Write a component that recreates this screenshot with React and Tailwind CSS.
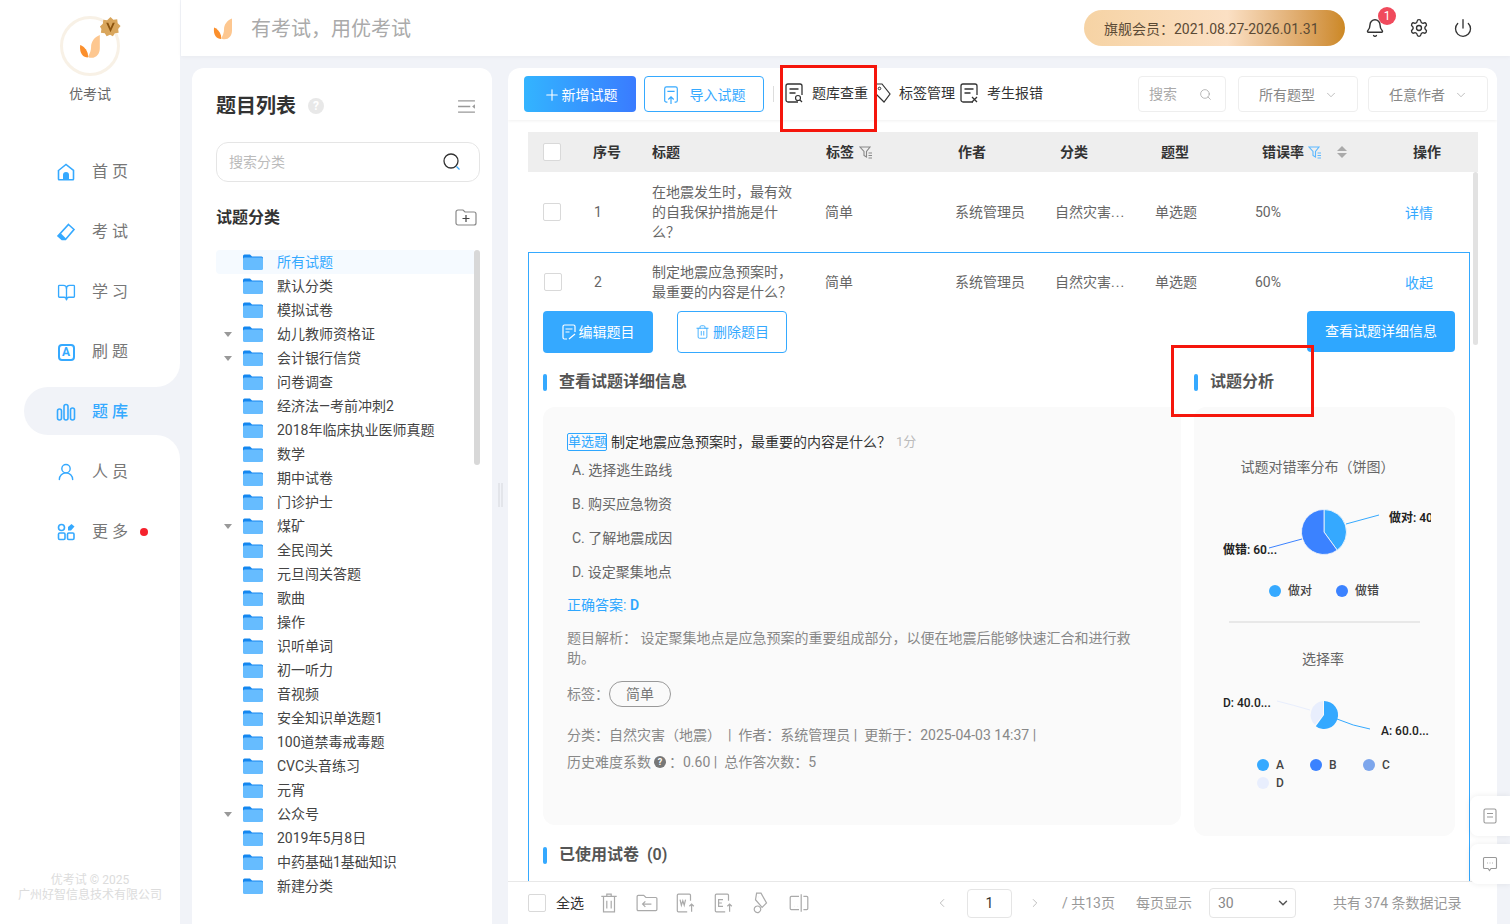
import { Bell, Settings, Power, Search, ChevronDown, ChevronLeft, ChevronRight, Plus, BookOpen, UserRound, Trash2 } from "lucide-react";

const NAV = [
    { label: "首 页", icon: "home" },
    { label: "考 试", icon: "eraser" },
    { label: "学 习", icon: "book" },
    { label: "刷 题", icon: "a" },
    { label: "题 库", icon: "bars" },
    { label: "人 员", icon: "user" },
    { label: "更 多", icon: "more" },
];

const TREE = [
    ["所有试题", false],
    ["默认分类", false],
    ["模拟试卷", false],
    ["幼儿教师资格证", true],
    ["会计银行信贷", true],
    ["问卷调查", false],
    ["经济法—考前冲刺2", false],
    ["2018年临床执业医师真题", false],
    ["数学", false],
    ["期中试卷", false],
    ["门诊护士", false],
    ["煤矿", true],
    ["全民闯关", false],
    ["元旦闯关答题", false],
    ["歌曲", false],
    ["操作", false],
    ["识听单词", false],
    ["初一听力", false],
    ["音视频", false],
    ["安全知识单选题1", false],
    ["100道禁毒戒毒题", false],
    ["CVC头音练习", false],
    ["元宵", false],
    ["公众号", true],
    ["2019年5月8日", false],
    ["中药基础1基础知识", false],
    ["新建分类", false],
];

function Logo({ className }) {
    return (
        <svg viewBox="0 0 20 22" className={className}>
            <path d="M19 1c-5 2-8 6-8 11 0 3-1 6-3 9 1 .5 2 .8 3.5.8C16 21.800 19 18 19 13z" fill="#fdc790" />
            <path d="M1 10c3 1 6 4 7 8 .2 1.500.2 2.500 0 3.500C4 21.500 0 18 1 10z" fill="#fb8f2c" />
        </svg>
    );
}

function NavIcon({ name }) {
    if (name === "book") return <BookOpen className="w-[19px] h-[19px] text-[#35a9ff]" strokeWidth={1.7} />;
    if (name === "user") return <UserRound className="w-5 h-5 text-[#35a9ff]" strokeWidth={1.7} />;
    if (name === "a") {
        return <div className="w-[17px] h-[17px] rounded-[4px] border-2 border-[#35a9ff] flex items-center justify-center text-[12px] font-bold leading-none text-[#35a9ff]">A</div>;
    }
    const stroke = { fill: "none", stroke: "#35a9ff", strokeWidth: 1.6 };
    return (
        <svg viewBox="0 0 20 20" className="w-5 h-5">
            {name === "home" && (
                <>
                    <path d="M2.500 8.500 10 2.500l7.500 6V17a.8.8 0 0 1-.8.8H3.300a.8.8 0 0 1-.8-.8z" {...stroke} />
                    <path d="M7 17.800V13a3 3 0 0 1 6 0v4.800z" fill="#35a9ff" />
                </>
            )}
            {name === "eraser" && (
                <>
                    <path d="M12.500 2.500 18 7.500 9.500 17.500H6L2 14z" {...stroke} />
                    <path d="M2 14l2.500-3 5.500 5.500-.5 1H6z" fill="#35a9ff" />
                </>
            )}
            {name === "bars" && (
                <>
                    <rect x="1.500" y="7" width="4" height="11" rx="2" {...stroke} />
                    <rect x="8" y="2.500" width="4" height="15.500" rx="2" {...stroke} />
                    <rect x="14.500" y="6" width="4" height="12" rx="2" {...stroke} />
                </>
            )}
            {name === "more" && (
                <>
                    <circle cx="5.500" cy="5.500" r="3" {...stroke} />
                    <rect x="2.500" y="11" width="6.500" height="6.500" rx="1.200" {...stroke} />
                    <rect x="11.500" y="11" width="6.500" height="6.500" rx="1.200" {...stroke} />
                    <path d="M12 8.500V5l3.500-3 3 2.500-3.500 4z" fill="#35a9ff" />
                </>
            )}
        </svg>
    );
}

function Sidebar() {
    return (
        <aside className="w-[180px] shrink-0 flex flex-col bg-[#f1f3f8]">
            <div className="bg-white h-[141px] flex flex-col items-center pt-[16px]">
                <div className="relative w-[60px] h-[60px] rounded-full border-[3px] border-[#f8f1e6] flex items-center justify-center">
                    <Logo className="w-[22px] h-[24px]" />
                    <svg viewBox="0 0 24 24" className="absolute -top-[3px] -right-[5px] w-[23px] h-[23px]">
                        <path d="M12 1l3 3 4-.5.5 4 3 3-2.500 3 .5 4-4 .5-2 3-3-1.500-3.500 1.500-2-3-4-.5.5-4L1 11l3-3 .5-4 4 .5z" fill="#d9a65c" />
                        <path d="M7.500 7 12 17l4.500-10h-2.200L12 12.500 9.700 7z" fill="#8c5510" />
                    </svg>
                </div>
                <div className="text-[14px] text-[#666] mt-[8px] leading-5">优考试</div>
            </div>
            {NAV.map((n, i) => (
                <div
                    key={n.label}
                    className={
                        i === 4
                            ? "h-[48px] bg-white"
                            : i === 3
                              ? "h-[66px] pb-[4px] bg-white rounded-br-[24px] flex items-center pl-[56px] gap-[16px]"
                              : i === 5
                                ? "h-[66px] pt-[8px] bg-white rounded-tr-[24px] flex items-center pl-[56px] gap-[16px]"
                                : "h-[60px] pt-[2px] bg-white flex items-center pl-[56px] gap-[16px]"
                    }
                >
                    {i === 4 ? (
                        <div className="h-full ml-[24px] pt-[2px] bg-[#f1f3f8] rounded-l-[24px] flex items-center pl-[32px] gap-[16px]">
                            <NavIcon name={n.icon} />
                            <span className="text-[16px] font-medium text-[#35a9ff]">{n.label}</span>
                        </div>
                    ) : (
                        <>
                            <div className="w-5 flex justify-center">
                                <NavIcon name={n.icon} />
                            </div>
                            <span className="text-[16px] text-[#777]">{n.label}</span>
                            {i === 6 && <span className="w-2 h-2 rounded-full bg-[#f5222d] -ml-[4px]" />}
                        </>
                    )}
                </div>
            ))}
            <div className="flex-1 bg-white flex flex-col justify-end items-center pb-[21px] text-[12px] leading-[15px] text-[#dcdcdc]">
                <div>优考试 © 2025</div>
                <div>广州好智信息技术有限公司</div>
            </div>
        </aside>
    );
}

function Header() {
    return (
        <header className="h-[56px] shrink-0 bg-white ml-px flex items-center pl-[32px] shadow-[0_1px_4px_rgba(0,0,0,0.04)]">
            <Logo className="w-[20px] h-[23px]" />
            <div className="ml-[18px] pt-[2px] text-[20px] text-[#aaa]">有考试&#xFF0C;用优考试</div>
            <div className="ml-auto w-[261px] h-[36px] rounded-full bg-linear-to-r from-[#f6d3a4] via-[#fbe0c4] via-55% to-[#cc8822] flex items-center pl-[20px] pt-[2px] text-[14px] text-[#5b4a35] whitespace-nowrap">
                旗舰会员&#xFF1A;2021.08.27-2026.01.31
            </div>
            <div className="relative ml-[20px]">
                <Bell className="w-[20px] h-[20px] text-[#333]" strokeWidth={1.7} />
                <span className="absolute -top-[11px] left-[13px] w-[18px] h-[18px] rounded-full bg-[#f04a5c] text-white text-[12px] leading-[18px] text-center">1</span>
            </div>
            <Settings className="ml-[24px] w-[20px] h-[20px] text-[#333]" strokeWidth={1.6} />
            <Power className="ml-[24px] mr-[37px] w-[20px] h-[20px] text-[#333]" strokeWidth={1.6} />
        </header>
    );
}

function Folder() {
    return (
        <svg viewBox="0 0 20 16" className="w-5 h-4 shrink-0">
            <path d="M0 2a1.500 1.500 0 0 1 1.500-1.500h5.500l2 2h9.500A1.500 1.500 0 0 1 20 4v3H0z" fill="#1487f0" />
            <rect x="0" y="3.500" width="20" height="12.500" rx="1.500" fill="#66bcff" />
        </svg>
    );
}

function TreePanel() {
    return (
        <section className="w-[300px] shrink-0 bg-white rounded-t-xl pl-[24px] pr-[12px] flex flex-col overflow-hidden">
            <div className="flex items-center h-[28px] mt-[24px]">
                <h1 className="text-[20px] font-bold text-[#333]">题目列表</h1>
                <span className="ml-[12px] w-4 h-4 rounded-full bg-[#e8e8e8] text-white text-[12px] leading-4 text-center font-bold">?</span>
                <svg viewBox="0 0 20 16" className="ml-auto mr-[4px] w-[19px] h-[15px]">
                    <path d="M1 2h18M1 8h13M1 14h18" stroke="#999" strokeWidth="1.500" />
                    <path d="M19 5.500v5L16 8z" fill="#999" />
                </svg>
            </div>
            <div className="mt-[22px] h-[40px] rounded-xl border border-[#e5e5e5] flex items-center pl-[12px] pr-[18px]">
                <span className="text-[14px] text-[#bbb]">搜索分类</span>
                <svg viewBox="0 0 18 18" className="ml-auto w-[18px] h-[18px]">
                    <circle cx="8" cy="8" r="7" fill="none" stroke="#333" strokeWidth="1.300" />
                    <path d="m13.500 13.500 3 3" stroke="#35a9ff" strokeWidth="1.300" />
                </svg>
            </div>
            <div className="mt-[25px] h-[22px] flex items-center justify-between">
                <h2 className="text-[16px] font-semibold text-[#333]">试题分类</h2>
                <svg viewBox="0 0 22 17" className="w-[22px] h-[17px] -mt-[2px] mr-[3px]">
                    <path d="M1 3a2 2 0 0 1 2-2h5l2 2h9a2 2 0 0 1 2 2v9a2 2 0 0 1-2 2H3a2 2 0 0 1-2-2z" fill="none" stroke="#888" strokeWidth="1.200" />
                    <path d="M7.500 9.500h7M11 6v7" stroke="#444" strokeWidth="1.200" />
                </svg>
            </div>
            <div className="mt-[21px] flex relative">
                <div className="flex-1">
                    {TREE.map(([name, caret], i) => (
                        <div key={name} className={i === 0 ? "h-[24px] flex items-center bg-[#f5faff] rounded-l text-[#35a9ff]" : "h-[24px] flex items-center text-[#444]"}>
                            <div className="w-[27px] flex justify-end pr-[11px] shrink-0">
                                {caret && <span className="w-0 h-0 border-x-[4px] border-x-transparent border-t-[5px] border-t-[#999]" />}
                            </div>
                            <Folder />
                            <span className="ml-[14px] text-[14px] whitespace-nowrap">{name}</span>
                        </div>
                    ))}
                </div>
                <div className="w-[6px] h-[215px] rounded bg-[#d8d8d8] shrink-0" />
            </div>
        </section>
    );
}

function ToolIcon({ badge }) {
    return (
        <svg viewBox="0 0 18 20" className="w-[18px] h-[20px] shrink-0">
            <path d="M13 19H3a2 2 0 0 1-2-2V3a2 2 0 0 1 2-2h12a2 2 0 0 1 2 2v9" fill="none" stroke="#333" strokeWidth="1.300" />
            <path d="M4.500 6h9M4.500 10h6" stroke="#333" strokeWidth="1.300" />
            {badge === "search" && (
                <>
                    <circle cx="13" cy="15" r="2.500" fill="#fff" stroke="#333" strokeWidth="1.200" />
                    <path d="m15 17 2 2" stroke="#333" strokeWidth="1.200" />
                </>
            )}
            {badge === "x" && <path d="m12 14 5 5m0-5-5 5" stroke="#333" strokeWidth="1.300" />}
        </svg>
    );
}

function Dropdown({ label }) {
    return (
        <div className="w-[120px] h-[36px] rounded border border-[#eee] flex items-center pl-[20px] pt-[2px] text-[14px] text-[#888]">
            {label}
            <ChevronDown className="ml-[9px] w-[14px] h-[14px] text-[#aaa]" strokeWidth={1.300} />
        </div>
    );
}

function Toolbar() {
    return (
        <div className="h-[52px] shrink-0 pl-[16px] pr-[9px] pb-[8px] pt-[8px] flex items-center shadow-[0_1px_3px_rgba(0,0,0,0.06)] relative">
            <button className="w-[112px] h-[36px] rounded pt-[2px] bg-linear-to-r from-[#33b4ff] to-[#3a7bff] text-white text-[14px] flex items-center justify-center">
                <Plus className="w-[18px] h-[18px] mr-[1px]" strokeWidth={1.500} />
                新增试题
            </button>
            <button className="ml-[8px] w-[120px] h-[36px] rounded pt-[2px] border border-[#35a9ff] text-[#35a9ff] text-[14px] flex items-center justify-center gap-[11px]">
                <svg viewBox="0 0 16 20" className="w-[16px] h-[18px]">
                    <path d="M4 18H3a2 2 0 0 1-2-2V3a2 2 0 0 1 2-2h10a2 2 0 0 1 2 2v13a2 2 0 0 1-2 2h-1M4 6h8" fill="none" stroke="#35a9ff" strokeWidth="1.300" />
                    <path d="M8 20v-8m-3 3 3-3 3 3" fill="none" stroke="#35a9ff" strokeWidth="1.300" />
                </svg>
                导入试题
            </button>
            <div className="ml-[9px] w-px h-[16px] bg-[#ddd]" />
            <div className="ml-[11px] -mt-[2px] flex items-center text-[14px] text-[#333]">
                <ToolIcon badge="search" />
                <span className="ml-[9px]">题库查重</span>
                <svg viewBox="0 0 18 20" className="ml-[5px] w-[18px] h-[20px]">
                    <path d="M3 1h6l8 10-6 8-9-9z" fill="none" stroke="#333" strokeWidth="1.200" />
                    <circle cx="6.500" cy="5.500" r="1.300" fill="none" stroke="#333" strokeWidth="1" />
                </svg>
                <span className="ml-[8px]">标签管理</span>
                <div className="ml-[5px]"><ToolIcon badge="x" /></div>
                <span className="ml-[9px]">考生报错</span>
            </div>
            <div className="ml-auto w-[88px] h-[36px] rounded border border-[#eee] flex items-center pl-[10px] pr-[13px] justify-between text-[14px] text-[#aaa]">
                搜索
                <Search className="w-[13px] h-[13px] text-[#aaa]" strokeWidth={1.500} />
            </div>
            <div className="ml-[12px]"><Dropdown label="所有题型" /></div>
            <div className="ml-[10px]"><Dropdown label="任意作者" /></div>
        </div>
    );
}

function FilterIcon({ color }) {
    return (
        <svg viewBox="0 0 14 14" className="w-[14px] h-[14px]">
            <path d="M1 2h10L7.500 6.500V12L5 10.500v-4z" fill="none" stroke={color} strokeWidth="1.100" />
            <path d="M9.500 8H13M9.500 10.500H13M9.500 13H13" stroke={color} strokeWidth="1" />
        </svg>
    );
}

const Checkbox = ({ className }) => <span className={`block w-[18px] h-[18px] rounded-[2px] border border-[#d9d9d9] bg-white shrink-0 ${className || ""}`} />;

function TableHead() {
    return (
        <div className="h-[40px] bg-[#eeeeee] flex items-center text-[14px] font-semibold text-[#333] w-[950px]">
            <div className="w-[65px] pl-[15px]"><Checkbox /></div>
            <div className="w-[59px]">序号</div>
            <div className="w-[174px]">标题</div>
            <div className="w-[132px] flex items-center gap-[5px]">标签 <FilterIcon color="#888" /></div>
            <div className="w-[102px]">作者</div>
            <div className="w-[101px]">分类</div>
            <div className="w-[101px]">题型</div>
            <div className="w-[151px] flex items-center gap-[4px]">
                错误率
                <FilterIcon color="#5cb8ff" />
                <div className="ml-[11px] flex flex-col gap-[2px]">
                    <span className="w-0 h-0 border-x-[5px] border-x-transparent border-b-[5px] border-b-[#aaa]" />
                    <span className="w-0 h-0 border-x-[5px] border-x-transparent border-t-[5px] border-t-[#aaa]" />
                </div>
            </div>
            <div>操作</div>
        </div>
    );
}

function Row({ no, title, rate, action, className, boxed }) {
    return (
        <div className={`flex items-center text-[14px] text-[#666] ${className}`}>
            <div className={boxed ? "w-[66px] pl-[16px]" : "w-[66px] pl-[15px]"}><Checkbox /></div>
            <div className="w-[58px]">{no}</div>
            <div className="w-[173px] pr-[27px] leading-[20px]">{title}</div>
            <div className="w-[130px]">简单</div>
            <div className="w-[100px]">系统管理员</div>
            <div className="w-[100px]">自然灾害<span className="tracking-[1px]">...</span></div>
            <div className="w-[100px]">单选题</div>
            <div className="w-[150px]">{rate}</div>
            <div className="pt-[3px] text-[#35a9ff]">{action}</div>
        </div>
    );
}

function SectionHead({ children, className }) {
    return (
        <div className={`flex items-center gap-[12px] ${className || ""}`}>
            <span className="w-[4px] h-[17px] rounded-full bg-[#35a9ff]" />
            <h3 className="text-[16px] font-semibold text-[#555]">{children}</h3>
        </div>
    );
}

function Question() {
    return (
        <div className="w-[638px] h-[418px] bg-[#fafafa] rounded-xl pl-[24px] pr-[40px] pt-[26px] text-[14px] text-[#666]">
            <div className="flex items-center h-[18px]">
                <span className="w-[40px] h-[18px] border border-[#2ea7ff] rounded-[2px] text-[#2ea7ff] text-[13px] leading-[16px] text-center whitespace-nowrap">单选题</span>
                <span className="ml-[4px] text-[#333]">制定地震应急预案时&#xFF0C;最重要的内容是什么&#xFF1F;</span>
                <span className="ml-[5px] text-[13px] text-[#bbb]">1分</span>
            </div>
            <div className="pl-[5px] mt-[9px] flex flex-col gap-[14px] leading-[20px]">
                <div>A. 选择逃生路线</div>
                <div>B. 购买应急物资</div>
                <div>C. 了解地震成因</div>
                <div>D. 设定聚集地点</div>
            </div>
            <div className="mt-[13px] text-[#2ea7ff] leading-[20px]">正确答案: <span className="font-semibold">D</span></div>
            <p className="mt-[13px] leading-[20px] text-[#888]">题目解析&#xFF1A;&nbsp;设定聚集地点是应急预案的重要组成部分&#xFF0C;以便在地震后能够快速汇合和进行救助&#x3002;</p>
            <div className="mt-[13px] flex items-center text-[#888]">
                标签&#xFF1A;
                <span className="w-[62px] h-[26px] rounded-full border border-[#999] text-[#777] text-center leading-[24px]">简单</span>
            </div>
            <div className="mt-[18px] leading-[20px] text-[#888] whitespace-nowrap">分类&#xFF1A;自然灾害&#xFF08;地震&#xFF09;&nbsp;&nbsp;|&nbsp;&nbsp;作者&#xFF1A;系统管理员&nbsp;|&nbsp;&nbsp;更新于&#xFF1A;2025-04-03 14:37 |</div>
            <div className="mt-[7px] leading-[20px] text-[#888] flex items-center whitespace-pre">
                历史难度系数
                <span className="mx-[3px] w-[12px] h-[12px] rounded-full bg-[#777] text-white text-[9px] leading-[12px] text-center font-bold">?</span>
                &#xFF1A;0.60 |  总作答次数&#xFF1A;5
            </div>
        </div>
    );
}

function Legend({ items, wrap }) {
    return (
        <div className={wrap ? "grid grid-cols-3 w-[159px] gap-y-[4px] ml-[63px]" : "flex justify-center gap-[24px]"}>
            {items.map((t) => (
                <div key={t[0]} className="flex items-center text-[12px] font-medium text-[#444] leading-[14px]">
                    <span className={`w-[12px] h-[12px] rounded-full mr-[7px] ${t[1]}`} />
                    {t[0]}
                </div>
            ))}
        </div>
    );
}

function Analysis() {
    return (
        <div className="w-[261px] h-[429px] bg-[#fafafa] rounded-xl pt-[50px] flex flex-col text-[14px] text-[#666]">
            <div className="text-center leading-[20px] pr-[14px]">试题对错率分布&#xFF08;饼图&#xFF09;</div>
            <svg viewBox="0 0 208 70" className="w-[208px] h-[70px] ml-[29px] mt-[24px] shrink-0">
                <path d="M101 8.500a22.500 22.500 0 0 1 13.200 40.700L101 31z" fill="#35a9ff" stroke="#fafafa" strokeWidth="0.800" />
                <path d="M114.200 49.200A22.500 22.500 0 1 1 101 8.500V31z" fill="#3b82ff" stroke="#fafafa" strokeWidth="0.800" />
                <path d="M123 23l33-9" stroke="#35a9ff" fill="none" />
                <path d="M46 47l33-9" stroke="#3b82ff" fill="none" />
                <text x="166" y="21" fontSize="12" fontWeight="600" fill="#222">做对: 40</text>
                <text x="0" y="53" fontSize="12" fontWeight="600" fill="#222">做错: 60...</text>
            </svg>
            <div className="mt-[13px] pr-[1px]">
                <Legend items={[["做对", "bg-[#35a9ff]"], ["做错", "bg-[#3b82ff]"]]} />
            </div>
            <div className="mt-[23px] ml-[35px] w-[191px] h-[2px] bg-[#e8e8e8]" />
            <div className="mt-[26px] text-center leading-[20px] pr-[3px]">选择率</div>
            <svg viewBox="0 0 208 60" className="w-[208px] h-[60px] ml-[29px] mt-[17px] shrink-0">
                <path d="M101 15a14 14 0 1 1-8.200 25.300L101 29z" fill="#35a9ff" />
                <path d="M92 39A14 14 0 0 1 100 15v14z" fill="#e8eefd" />
                <path d="M114 33q16 7 33 10" stroke="#35a9ff" fill="none" />
                <path d="M54 15q16 4 33 9" stroke="#e8eefd" fill="none" />
                <text x="0" y="21" fontSize="12" fontWeight="500" fill="#222">D: 40.0...</text>
                <text x="158" y="49" fontSize="12" fontWeight="500" fill="#222">A: 60.0...</text>
            </svg>
            <div className="mt-[12px]">
                <Legend wrap items={[["A", "bg-[#35a9ff]"], ["B", "bg-[#3b82ff]"], ["C", "bg-[#7da6ec]"], ["D", "bg-[#e8eefd]"]]} />
            </div>
        </div>
    );
}

function Detail() {
    return (
        <div className="h-[629px] w-[942px] border-x border-t border-[#35a9ff] overflow-hidden">
            <Row boxed no="2" title="制定地震应急预案时&#xFF0C;最重要的内容是什么&#xFF1F;" rate="60%" action="收起" className="h-[58px] -ml-px" />
            <div className="px-[14px] flex items-start">
                <button className="w-[110px] h-[42px] rounded bg-[#35a9ff] text-white text-[14px] flex items-center justify-center gap-[3px]">
                    <svg viewBox="0 0 14 16" className="w-[14px] h-[16px]">
                        <path d="M5 15H2.500A1.500 1.500 0 0 1 1 13.500v-11A1.500 1.500 0 0 1 2.500 1h9A1.500 1.500 0 0 1 13 2.500V8M3.500 5h7M3.500 8h4M7 15l6-5" fill="none" stroke="#fff" strokeWidth="1.200" />
                    </svg>
                    编辑题目
                </button>
                <button className="ml-[24px] w-[110px] h-[42px] rounded border border-[#35a9ff] text-[#35a9ff] text-[14px] flex items-center justify-center gap-[3px]">
                    <Trash2 className="w-[15px] h-[16px]" strokeWidth={1.400} />
                    删除题目
                </button>
                <button className="ml-auto w-[148px] h-[41px] rounded bg-[#2ea7ff] text-white text-[14px]">查看试题详细信息</button>
            </div>
            <div className="px-[14px] mt-[17px] flex">
                <SectionHead className="w-[651px]">查看试题详细信息</SectionHead>
                <SectionHead>试题分析</SectionHead>
            </div>
            <div className="px-[14px] mt-[13px] flex items-start gap-[13px]">
                <Question />
                <Analysis />
            </div>
            <SectionHead className="px-[14px] mt-[7px]">已使用试卷&nbsp; (0)</SectionHead>
        </div>
    );
}

function FootIcon({ children }) {
    return (
        <svg viewBox="0 0 20 20" className="w-[22px] h-[22px] shrink-0" fill="none" stroke="#aaa" strokeWidth="1.100">
            {children}
        </svg>
    );
}

function Footer() {
    return (
        <div className="h-[43px] shrink-0 border-t border-[#e8e8e8] flex items-center pl-[20px] text-[14px]">
            <Checkbox />
            <span className="ml-[10px] text-[#333] w-[42px]">全选</span>
            <div className="flex items-center gap-[16px]">
                <FootIcon><path d="M3 4h14M8 4V2h4v2M5 4v14h10V4M8 8v7M12 8v7" /></FootIcon>
                <FootIcon><path d="M1 16V4a1 1 0 0 1 1-1h5l2 2h9a1 1 0 0 1 1 1v10a1 1 0 0 1-1 1H2a1 1 0 0 1-1-1zM14 11H6m2.500-2.500L6 11l2.500 2.500" /></FootIcon>
                <FootIcon><path d="M15 8V3a1 1 0 0 0-1-1H4a1 1 0 0 0-1 1v14a1 1 0 0 0 1 1h8M5.500 7l1.200 5 1.300-4 1.300 4 1.200-5M16 18v-7m-2 2 2-2 2 2" /></FootIcon>
                <FootIcon><path d="M15 8V3a1 1 0 0 0-1-1H4a1 1 0 0 0-1 1v14a1 1 0 0 0 1 1h8M10 7H6v6h4M6 10h3M16 18v-7m-2 2 2-2 2 2" /></FootIcon>
                <FootIcon><path d="M6 1h4l5 9-4 4-6-7zM8 4.500h.1M8 13a3 3 0 1 0 0 5.500 3 3 0 0 0 0-5.500z" /></FootIcon>
                <FootIcon><path d="M10 4H3a1 1 0 0 0-1 1v10a1 1 0 0 0 1 1h7M14 4h3a1 1 0 0 1 1 1v10a1 1 0 0 1-1 1h-3M12 2v16M6 13h.1M9 13h.1" /></FootIcon>
            </div>
            <ChevronLeft className="ml-[125px] w-[14px] h-[14px] text-[#aaa]" strokeWidth={1.300} />
            <div className="ml-[18px] w-[45px] h-[29px] rounded border border-[#e5e5e5] text-center leading-[27px] text-[#333]">1</div>
            <ChevronRight className="ml-[16px] w-[14px] h-[14px] text-[#aaa]" strokeWidth={1.300} />
            <span className="ml-[20px] text-[#999]">/ 共13页</span>
            <span className="ml-[21px] text-[#999]">每页显示</span>
            <div className="ml-[17px] w-[87px] h-[30px] rounded border border-[#e5e5e5] flex items-center justify-between pl-[8px] pr-[5px] text-[#888]">
                30
                <ChevronDown className="w-[14px] h-[14px] text-[#555]" strokeWidth={2.500} />
            </div>
            <span className="ml-[37px] text-[#999] whitespace-nowrap">共有 374 条数据记录</span>
        </div>
    );
}

function MainPanel() {
    return (
        <section className="w-[989px] shrink-0 bg-white rounded-t-xl flex flex-col overflow-hidden">
            <Toolbar />
            <div className="flex-1 pl-[20px] pt-[12px] overflow-hidden relative">
                <TableHead />
                <Row no="1" title="在地震发生时&#xFF0C;最有效的自我保护措施是什么&#xFF1F;" rate="50%" action="详情" className="h-[80px] w-[942px]" />
                <Detail />
                <div className="absolute left-[965px] top-[52px] w-[5px] h-[173px] rounded bg-[#e2e2e2]" />
            </div>
            <Footer />
        </section>
    );
}

export default function App() {
    return (
        <div className="relative w-[1510px] h-[924px] overflow-hidden flex bg-[#f1f3f8] font-['Roboto','Noto_Sans_CJK_SC',sans-serif]">
            <Sidebar />
            <div className="flex-1 flex flex-col min-w-0">
                <Header />
                <main className="flex-1 min-h-0 flex pt-[12px] pl-[12px]">
                    <TreePanel />
                    <div className="w-[16px] shrink-0 flex items-center justify-center gap-px pb-[2px]">
                        <span className="w-[2px] h-[24px] bg-[#e3e5ea]" />
                        <span className="w-[2px] h-[24px] bg-[#e3e5ea]" />
                    </div>
                    <MainPanel />
                </main>
            </div>

            {/* red marks lying over the shot */}
            <div className="absolute left-[780px] top-[65px] w-[97px] h-[67px] border-[3px] border-[#f5160c]" />
            <div className="absolute left-[1171px] top-[345px] w-[143px] h-[72px] border-[3px] border-[#f5160c]" />

            {/* floating side buttons */}
            <div className="absolute left-[1470px] top-[796px] w-[40px] h-[40px] rounded-l-lg bg-white shadow-[0_0_6px_rgba(0,0,0,0.08)] flex items-center justify-center">
                <svg viewBox="0 0 14 16" className="w-[14px] h-[16px]" fill="none" stroke="#999" strokeWidth="1.100">
                    <rect x="1" y="1" width="12" height="14" rx="1.500" />
                    <path d="M4 5.500h6M4 9h6" />
                </svg>
            </div>
            <div className="absolute left-[1470px] top-[844px] w-[40px] h-[40px] rounded-l-lg bg-white shadow-[0_0_6px_rgba(0,0,0,0.08)] flex items-center justify-center">
                <svg viewBox="0 0 16 16" className="w-[16px] h-[16px]" fill="none" stroke="#999" strokeWidth="1.100">
                    <path d="M2.500 1.500h11a1 1 0 0 1 1 1v9a1 1 0 0 1-1 1H9l-1.500 2-1.500-2H2.500a1 1 0 0 1-1-1v-9a1 1 0 0 1 1-1z" />
                    <path d="M5 7h.8M7.600 7h.8M10.200 7h.8" />
                </svg>
            </div>
        </div>
    );
}
